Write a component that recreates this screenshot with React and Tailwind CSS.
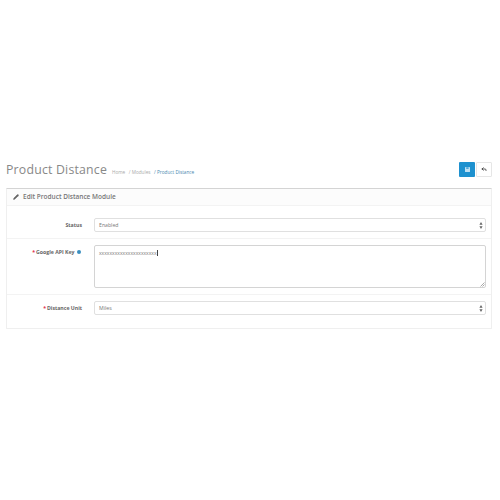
import { Pencil, Reply } from "lucide-react";

const SelectArrows = () => (
    <svg width="4" height="7" viewBox="0 0 4 7" className="absolute right-[2px] top-[3px]">
        <path d="M2 0 L3.6 2.8 H0.4 Z M2 7 L0.4 4.2 H3.6 Z" fill="#666" />
    </svg>
);

function FakeSelect({ value }) {
    return (
        <div className="relative w-[392px] h-[14px] bg-white border border-[#e0e0e0] rounded-[2px] pl-[4px] text-[5.2px] leading-[13px] text-[#777]">
            {value}
            <SelectArrows />
        </div>
    );
}

function Label({ required, children }) {
    return (
        <div className="w-[75px] flex justify-end items-center gap-[1px] text-[5.2px] font-bold text-[#666] leading-[8px]">
            {required && <span className="text-[#e0324b]">*</span>}
            {children}
        </div>
    );
}

export default function App() {
    return (
        <div className="w-[500px] h-[500px] bg-white pt-[162px] pl-[6px] pr-[8px] font-['Open_Sans',sans-serif]">
            <div className="flex items-center justify-between h-[15px]">
                <div className="flex items-baseline -mt-[1px]">
                    <h1 className="text-[12.3px] leading-[15px] text-[#888] font-normal tracking-[0.2px]">Product Distance</h1>
                    <div className="flex gap-[3.5px] ml-[5px] text-[4.7px] text-[#aaa]">
                        <span>Home</span>
                        <span>/ Modules</span>
                        <span className="text-[#4a88b0]">/ Product Distance</span>
                    </div>
                </div>
                <div className="flex gap-[1px] self-start">
                    <div className="w-[16px] h-[14.5px] bg-[#1e91cf] rounded-[1px] flex items-center justify-center">
                        <svg width="5" height="5" viewBox="0 0 5 5">
                            <rect width="5" height="5" rx="0.5" fill="#bfe0f3" />
                            <rect x="1.2" y="0.4" width="2.4" height="1.3" fill="#1e91cf" />
                        </svg>
                    </div>
                    <div className="w-[16px] h-[14.5px] bg-white border border-[#e6e6e6] rounded-[1px] flex items-center justify-center text-[#444]">
                        <Reply size={6} strokeWidth={3.5} />
                    </div>
                </div>
            </div>

            <div className="mt-[11px] w-[486px] border border-[#efefef] border-t-[#d4d4d4] rounded-[1px]">
                <div className="h-[17px] bg-[#fcfcfc] border-b border-[#f3f3f3] flex items-center pl-[6px] gap-[4px] text-[#666]">
                    <Pencil size={6} fill="#666" strokeWidth={2} />
                    <span className="text-[6.5px] font-semibold text-[#777]">Edit Product Distance Module</span>
                </div>
                <div className="flex gap-[12px] pt-[12px] pb-[6px] border-b border-[#f3f3f3]">
                    <Label>Status</Label>
                    <FakeSelect value="Enabled" />
                </div>
                <div className="flex gap-[12px] pt-[6px] pb-[6px] border-b border-[#f3f3f3]">
                    <div className="w-[74px] mr-[1px] flex justify-end items-start pt-[3px] gap-[1px] text-[5.2px] font-bold text-[#666] leading-[8px]">
                        <span className="text-[#e0324b]">*</span>
                        Google API Key
                        <span className="ml-[1px] mt-[1.5px] w-[4.5px] h-[4.5px] rounded-full bg-[#3a8fc0]" />
                    </div>
                    <div className="relative w-[392px] h-[43px] bg-white border border-[#d4d4d4] rounded-[2px] pl-[4px] pt-[3px] text-[5px] leading-[8px] text-[#777]">
                        <span className="border-r border-[#444]">xxxxxxxxxxxxxxxxxxxxxx</span>
                        <svg width="5" height="5" viewBox="0 0 5 5" className="absolute right-0 bottom-0">
                            <path d="M4.5 0.5 L0.5 4.5 M4.5 2.5 L2.5 4.5" stroke="#aaa" strokeWidth="1" />
                        </svg>
                    </div>
                </div>
                <div className="flex gap-[12px] pt-[6px] pb-[13px]">
                    <Label required>Distance Unit</Label>
                    <FakeSelect value="Miles" />
                </div>
            </div>
        </div>
    );
}
